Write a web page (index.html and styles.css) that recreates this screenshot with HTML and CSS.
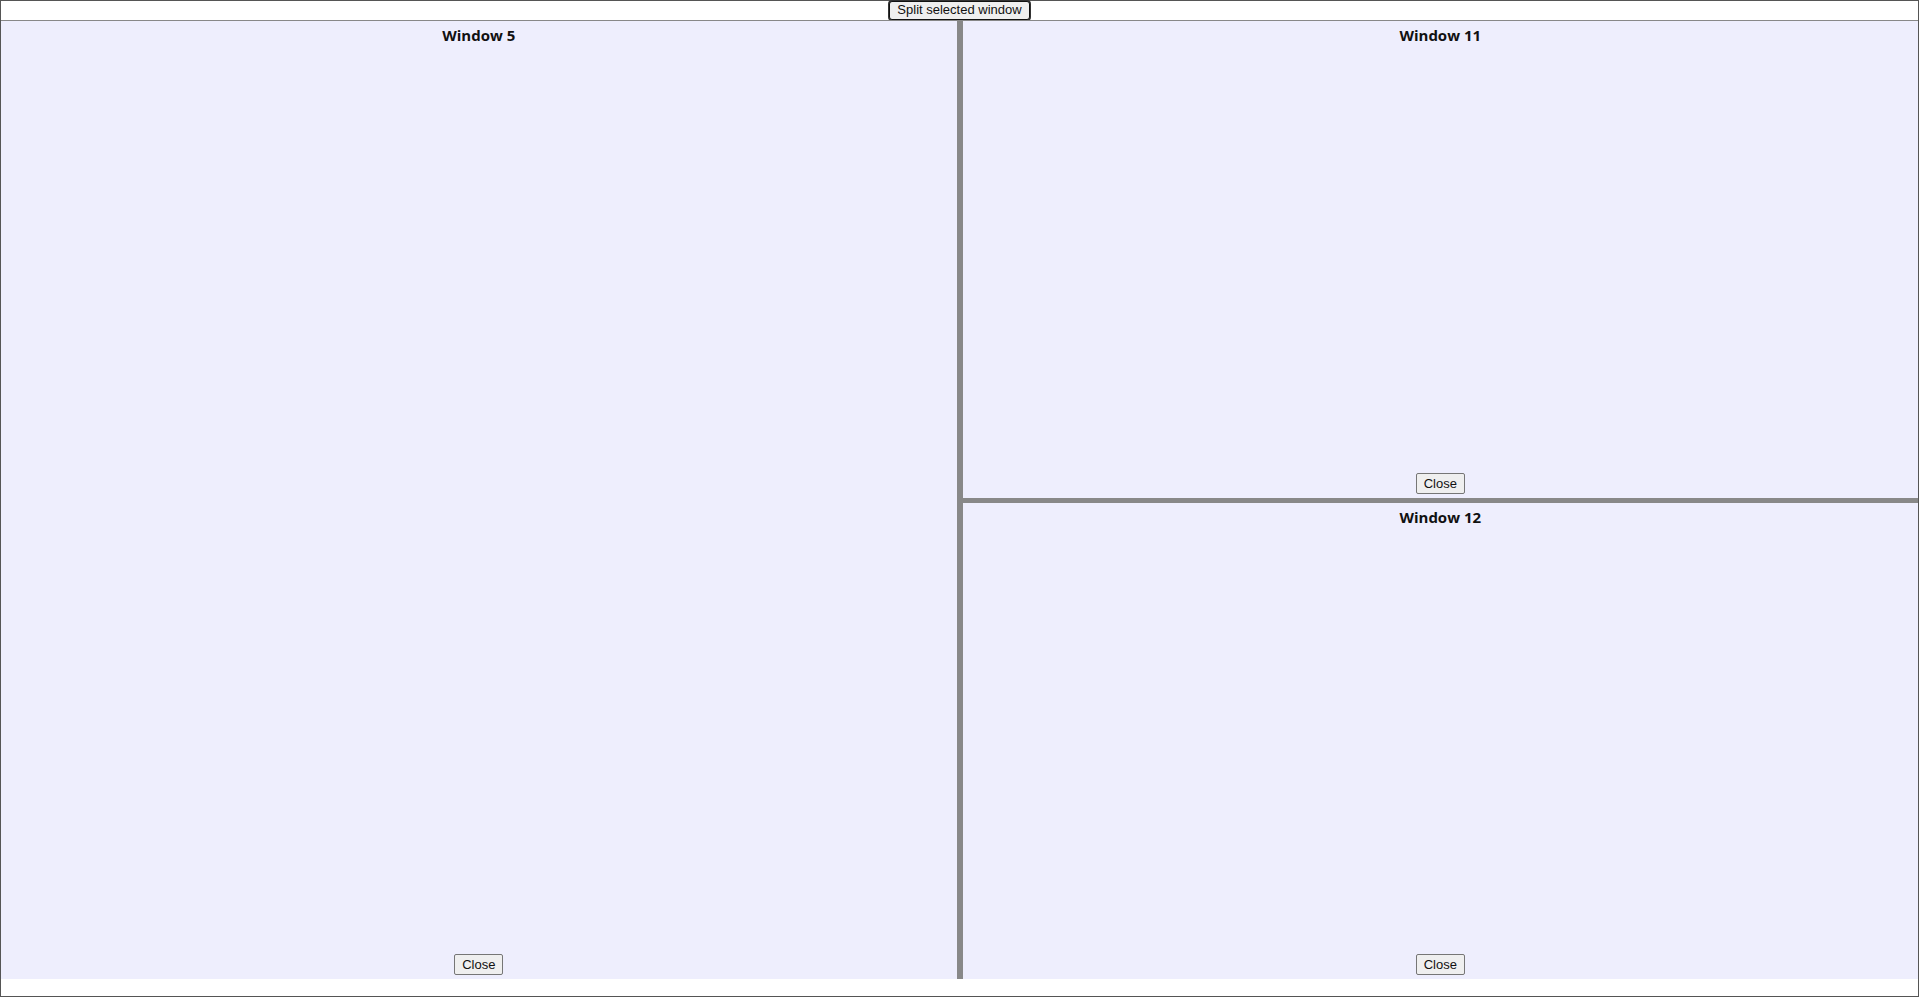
FILE: index.html
```html
<!DOCTYPE html>
<html lang="en">
<head>
    <meta charset="UTF-8">
    <meta name="viewport" content="width=device-width, initial-scale=1.0">
    <title>Split windows</title>
    <link rel="stylesheet" href="styles.css">
</head>
<body>
    <div class="app">
        <div class="toolbar">
            <button class="split-btn">Split selected window</button>
        </div>
        <div class="workspace">
            <section class="win">
                <h2 class="win-title">Window 5</h2>
                <button class="close-btn">Close</button>
            </section>
            <div class="divider-v"></div>
            <div class="stack">
                <section class="win">
                    <h2 class="win-title">Window 11</h2>
                    <button class="close-btn">Close</button>
                </section>
                <div class="divider-h"></div>
                <section class="win">
                    <h2 class="win-title">Window 12</h2>
                    <button class="close-btn">Close</button>
                </section>
            </div>
        </div>
    </div>
</body>
</html>
```

FILE: styles.css
```css
html{
    box-sizing: border-box;
    font-family: "Liberation Sans", Arial, sans-serif;
}
*,
*::after,
*::before{
    box-sizing: inherit;
}
body{
    margin: 0;
}
.app{
    height: 997px;
    border: 1px solid #555;
    display: flex;
    flex-direction: column;
}
.toolbar{
    height: 19px;
    display: flex;
    justify-content: center;
    align-items: flex-start;
}
.split-btn{
    font-family: "Liberation Sans", Arial, sans-serif;
    font-size: 13px;
    line-height: 15px;
    height: 19px;
    padding: 0 7px 2px;
    background: #efefef;
    border: 1px solid #111;
    border-radius: 3px;
    box-shadow: 0 0 0 1px #333;
    color: #111;
}
.workspace{
    display: flex;
    height: 959px;
    border-top: 1px solid #888;
}
.win{
    flex: 1;
    background: #eeeefd;
    display: flex;
    flex-direction: column;
    align-items: center;
    justify-content: space-between;
    padding: 2px 0 4px;
    min-width: 0;
}
.win-title{
    margin: 0;
    font-family: "Open Sans", "DejaVu Sans", sans-serif;
    font-size: 15px;
    font-weight: bold;
    line-height: 24px;
    color: #111;
}
.close-btn{
    font-family: "Liberation Sans", Arial, sans-serif;
    font-size: 13px;
    height: 21px;
    padding: 1px 7px;
    background: #efefef;
    border: 1px solid #767676;
    border-radius: 2px;
    color: #111;
}
.divider-v{
    width: 6px;
    background: #888;
}
.stack{
    flex: 1;
    display: flex;
    flex-direction: column;
}
.divider-h{
    height: 5px;
    background: #888;
}
```
